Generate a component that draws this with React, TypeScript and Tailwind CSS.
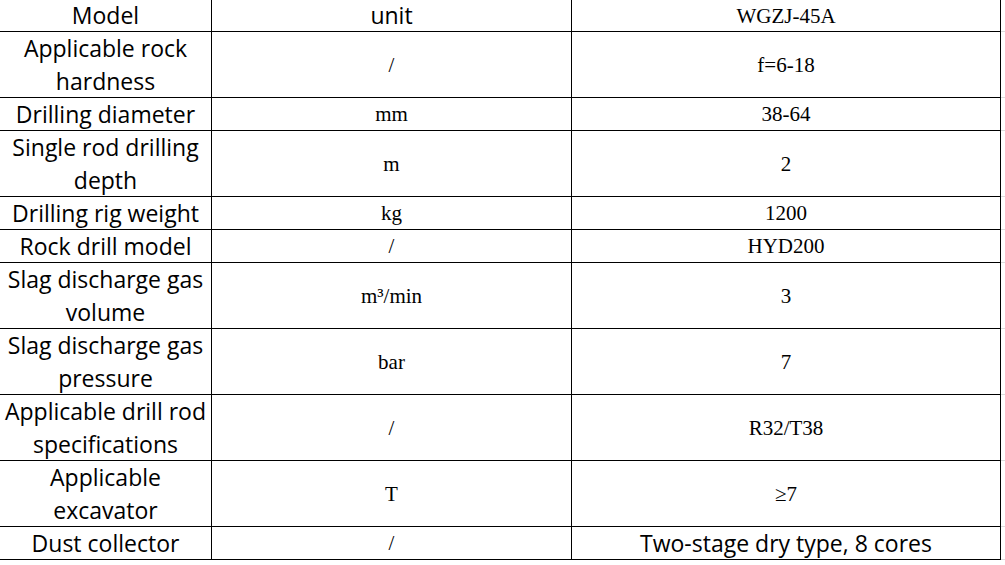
import React from "react";

type Row = {
  name: string[];
  unit: string;
  unitSans?: boolean;
  value: string;
  valueSans?: boolean;
  tall?: boolean;
  first?: boolean;
};

const rows: Row[] = [
  { name: ["Model"], unit: "unit", unitSans: true, value: "WGZJ-45A", first: true },
  { name: ["Applicable rock", "hardness"], unit: "/", value: "f=6-18", tall: true },
  { name: ["Drilling diameter"], unit: "mm", value: "38-64" },
  { name: ["Single rod drilling", "depth"], unit: "m", value: "2", tall: true },
  { name: ["Drilling rig weight"], unit: "kg", value: "1200" },
  { name: ["Rock drill model"], unit: "/", value: "HYD200" },
  { name: ["Slag discharge gas", "volume"], unit: "m³/min", value: "3", tall: true },
  { name: ["Slag discharge gas", "pressure"], unit: "bar", value: "7", tall: true },
  { name: ["Applicable drill rod", "specifications"], unit: "/", value: "R32/T38", tall: true },
  { name: ["Applicable", "excavator"], unit: "T", value: "≥7", tall: true },
  { name: ["Dust collector"], unit: "/", value: "Two-stage dry type, 8 cores", valueSans: true },
];

const sans = "font-['Open_Sans',sans-serif] text-[23px] leading-[33px]";
const serif = "font-['Liberation_Serif',serif] text-[21px] leading-[32px]";

export default function App() {
  return (
    <div className="w-[1005px] h-[565px] bg-white text-black overflow-hidden">
      {rows.map((r, i) => (
        <div
          key={i}
          className={
            "flex " +
            (r.first ? "h-[32px]" : r.tall ? "h-[66px]" : "h-[33px]")
          }
        >
          <div className="flex w-[1001px] border-b border-black">
            <div className={"w-[212px] border-r border-black flex flex-col items-center justify-center whitespace-nowrap " + sans}>
              {r.name.map((n, j) => (
                <span key={j}>{n}</span>
              ))}
            </div>
            <div
              className={
                "w-[360px] border-r border-black flex items-center justify-center " +
                (r.unitSans ? sans : serif)
              }
            >
              {r.unit}
            </div>
            <div
              className={
                "w-[429px] border-r border-black flex items-center justify-center whitespace-nowrap " +
                (r.valueSans ? sans : serif)
              }
            >
              {r.value}
            </div>
          </div>
          <div className="flex-1 border-b border-[#dcdcdc]" />
        </div>
      ))}
    </div>
  );
}
